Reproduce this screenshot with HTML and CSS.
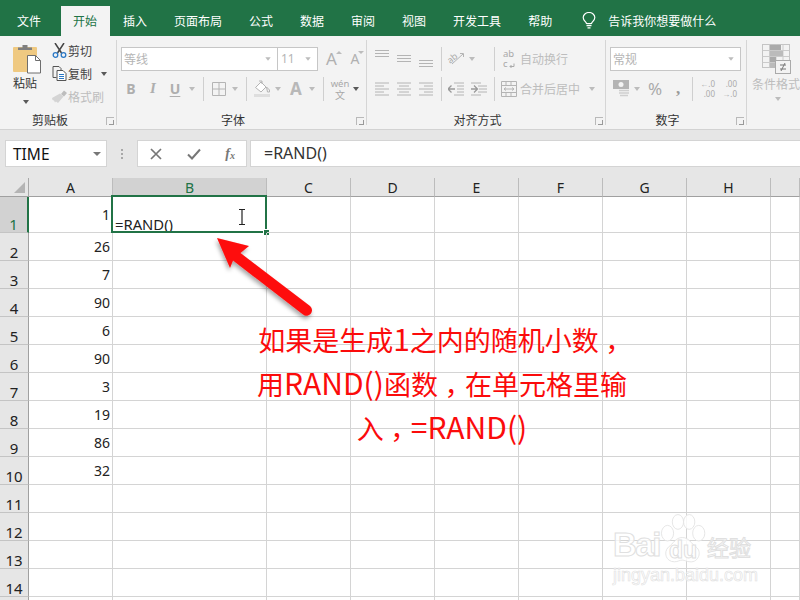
FILE: index.html
```html
<!DOCTYPE html>
<html lang="zh-CN">
<head>
<meta charset="utf-8">
<title>Excel RAND</title>
<link rel="stylesheet" href="styles.css">
</head>
<body>
<div class="app">
  <nav class="tabs">
    <span class="tab first">文件</span>
    <span class="tab active">开始</span>
    <span class="tab">插入</span>
    <span class="tab">页面布局</span>
    <span class="tab">公式</span>
    <span class="tab">数据</span>
    <span class="tab">审阅</span>
    <span class="tab">视图</span>
    <span class="tab">开发工具</span>
    <span class="tab">帮助</span>
    <svg class="bulb" width="14" height="17" viewBox="0 0 14 17"><path d="M4.5 11.5C4 9.5 1.2 8.5 1.2 5.5a5.8 5 0 0 1 11.6 0c0 3-2.800 4-3.300 6z" fill="none" stroke="#fff" stroke-width="1.200"/><path d="M4.500 13.500h5M5.500 15.800h3" stroke="#fff" stroke-width="1.300"/></svg>
    <span class="tell">告诉我你想要做什么</span>
  </nav>

  <section class="ribbon">
    <div class="group g-clip">
      <div class="clip-body">
        <div class="paste">
          <svg width="28" height="30" viewBox="0 0 28 30"><rect x="0" y="3" width="24" height="25" rx="1" fill="#efc981"/><path d="M5 6V3.500h4.500V1h5v2.500H19V6z" fill="#7f7f7f"/><path d="M14.500 11.500h8l5 5v12.500h-13z" fill="#fff" stroke="#6e6e6e"/><path d="M22.500 11.500v5h5" fill="none" stroke="#6e6e6e"/></svg>
          <span class="paste-label">粘贴</span>
          <i class="caret dark paste-caret"></i>
        </div>
        <div class="clip-tools">
          <div class="tool"><span class="tool-icon">
            <svg width="15" height="15" viewBox="0 0 15 15"><path d="M3 0l6.500 10M12 0L5.500 10" stroke="#444" stroke-width="1.500" fill="none"/><circle cx="3.500" cy="12" r="2.300" fill="none" stroke="#2b78c5" stroke-width="1.300"/><circle cx="11.500" cy="12" r="2.300" fill="none" stroke="#2b78c5" stroke-width="1.300"/></svg>
          </span><span class="tool-text">剪切</span></div>
          <div class="tool"><span class="tool-icon">
            <svg width="15" height="15" viewBox="0 0 15 15"><path d="M1 .5h6l2 2v2M4.500 11.500H1V.5" fill="none" stroke="#555"/><path d="M5 4.500h6l3 3v7H5z" fill="#fff" stroke="#555"/><path d="M7 8.500h5M7 10.500h5M7 12.500h5" stroke="#2b78c5"/></svg>
          </span><span class="tool-text">复制</span><i class="caret dark copy-caret"></i></div>
          <div class="tool"><span class="tool-icon">
            <svg width="17" height="14" viewBox="0 0 17 14"><path d="M10 4l3-3.500 3 2.500-3 3.500z" fill="#bdbdbd"/><path d="M1 8l8-4.500 3.500 3L7 13 5 11.500 4 12.500 3 10.500 1.500 10z" fill="#d4d4d4"/></svg>
          </span><span class="tool-text off">格式刷</span></div>
        </div>
      </div>
      <div class="g-label">剪贴板</div>
      <i class="launcher"></i>
    </div>

    <div class="group g-font">
      <div class="g-row font-r1">
        <div class="select sel-name"><span>等线</span><i class="caret"></i></div>
        <div class="select sel-size"><span>11</span><i class="caret"></i></div>
        <span class="cell glyph-a big">A<i class="up"></i></span>
        <span class="cell glyph-a small">A<i class="down"></i></span>
      </div>
      <div class="g-row font-r2">
        <b class="cell fmt">B</b>
        <i class="cell fmt ital">I</i>
        <u class="cell fmt">U</u>
        <span class="cell"><i class="caret"></i></span>
        <span class="cell"><i class="sep"></i></span>
        <span class="cell"><svg width="14" height="14" viewBox="0 0 14 14"><path d="M.5.500h13v13H.5zM7 .5v13M.5 7h13" fill="none" stroke="#b4b4b4"/></svg></span>
        <span class="cell"><i class="caret"></i></span>
        <span class="cell"><i class="sep"></i></span>
        <span class="cell"><svg width="17" height="17" viewBox="0 0 17 17"><path d="M1.500 7.500L7 2l5 5-5 5z" fill="#fff" stroke="#b4b4b4"/><path d="M5 1h3v3M12.500 7l3 3v2h-2z" fill="none" stroke="#b4b4b4"/><rect x="0" y="14" width="16" height="3" fill="#dedede"/></svg></span>
        <span class="cell"><i class="caret"></i></span>
        <span class="cell letter">A</span>
        <span class="cell"><i class="caret"></i></span>
        <span class="cell"><i class="sep"></i></span>
        <span class="cell wen"><span class="wen-top">wén</span><span class="wen-bot">文</span></span>
        <span class="cell"><i class="caret dark"></i></span>
      </div>
      <div class="g-label">字体</div>
      <i class="launcher"></i>
    </div>

    <div class="group g-align">
      <div class="g-row al-r1">
        <span class="cell"><svg width="16" height="20" viewBox="0 0 16 20"><path d="M1 1.500h14M1 4.500h14M1 7.500h14" stroke="#b4b4b4"/></svg></span>
        <span class="cell"><svg width="16" height="20" viewBox="0 0 16 20"><path d="M1 6.500h14M1 9.500h14M1 12.500h14" stroke="#b4b4b4"/></svg></span>
        <span class="cell"><svg width="16" height="20" viewBox="0 0 16 20"><path d="M1 11.500h14M1 14.500h14M1 17.500h14" stroke="#b4b4b4"/></svg></span>
        <span class="cell"><i class="sep"></i></span>
        <span class="cell"><svg class="rot" width="18" height="16" viewBox="0 0 18 16"><path d="M5 13L16 3M13 2.500h3.500V6" fill="none" stroke="#b4b4b4"/><text class="rot-ab" x="1" y="11" transform="rotate(-40 5 9)">ab</text></svg></span>
        <span class="cell"><i class="caret"></i></span>
        <span></span>
        <span class="cell"><i class="sep"></i></span>
        <span class="cell wrap-ab"><span>ab</span><span class="wrap-c">c<svg width="6" height="6" viewBox="0 0 6 6"><path d="M5 .5v3H1M2.500 2L1 3.500 2.500 5" fill="none" stroke="#aaa"/></svg></span></span>
        <span class="al-text">自动换行</span>
      </div>
      <div class="g-row al-r2">
        <span class="cell"><svg width="16" height="14" viewBox="0 0 16 14"><path d="M1 1.500h14M1 4.500h9M1 7.500h14M1 10.500h9M1 13.500h14" stroke="#b4b4b4" transform="translate(0 -.5)"/></svg></span>
        <span class="cell"><svg width="16" height="14" viewBox="0 0 16 14"><path d="M1 1h14M3 4h10M1 7h14M3 10h10M1 13h14" stroke="#b4b4b4"/></svg></span>
        <span class="cell"><svg width="16" height="14" viewBox="0 0 16 14"><path d="M1 1h14M6 4h9M1 7h14M6 10h9M1 13h14" stroke="#b4b4b4"/></svg></span>
        <span class="cell"><i class="sep"></i></span>
        <span class="cell"><svg width="16" height="14" viewBox="0 0 16 14"><path d="M6 1h10M9 4h7M9 7h7M9 10h7M6 13h10" stroke="#b4b4b4"/><path d="M0 7h7M3.500 3.500L0 7l3.500 3.500" fill="none" stroke="#9a9a9a" stroke-width="1.300"/></svg></span>
        <span class="cell"><svg width="16" height="14" viewBox="0 0 16 14"><path d="M0 1h10M7 4h9M8 7h8M7 10h9M0 13h10" stroke="#b4b4b4"/><path d="M0 7h6M3 3.500L6.500 7 3 10.500" fill="none" stroke="#9a9a9a" stroke-width="1.300"/></svg></span>
        <span class="cell"><i class="sep"></i></span>
        <span class="cell"><svg width="16" height="16" viewBox="0 0 16 16"><path d="M.5.500h15v15H.5zM.5 4.500h15M.5 11.500h15M5 .5v4M10 .5v4M5 11.500v4M10 11.500v4M3 8h10M3 8l2-1.500M3 8l2 1.500M13 8l-2-1.500M13 8l-2 1.500" fill="none" stroke="#b4b4b4"/></svg></span>
        <span class="al-text">合并后居中</span>
        <span class="cell"><i class="caret"></i></span>
      </div>
      <div class="g-label">对齐方式</div>
      <i class="launcher"></i>
    </div>

    <div class="group g-num">
      <div class="g-row num-r1">
        <div class="select sel-fmt"><span>常规</span><i class="caret"></i></div>
      </div>
      <div class="g-row num-r2">
        <span class="cell"><svg width="17" height="18" viewBox="0 0 17 18"><rect x="0" y="0" width="16" height="9" fill="#b4b4b4"/><circle cx="8" cy="4.500" r="2.500" fill="#f3f3f3"/><path d="M6 10.500h10M6 13h10M7 15.500h8" stroke="#cfcfcf" stroke-width="1.500"/></svg></span>
        <span class="cell"><i class="caret"></i></span>
        <span class="cell pct">%</span>
        <span class="cell comma">,</span>
        <span class="cell"><i class="sep"></i></span>
        <span class="cell dec"><span>←.0</span><span>.00</span></span>
        <span class="cell dec"><span>.00</span><span>→.0</span></span>
      </div>
      <div class="g-label">数字</div>
      <i class="launcher"></i>
    </div>

    <div class="group g-style">
      <svg class="cf-icon" width="29" height="30" viewBox="0 0 29 30">
        <rect x=".5" y=".5" width="27" height="23" fill="#f3f3f3" stroke="#c4c4c4"/>
        <path d="M7.500 .5v23M14 .5v23M21 .5v23M.5 6.500h27M.5 12.500h27M.5 18.500h27" stroke="#cbcbcb"/>
        <rect x="8" y="1" width="11" height="5" fill="#aaa"/><rect x="8" y="7" width="13" height="5" fill="#bbb"/><rect x="8" y="13" width="6" height="5" fill="#aaa"/><rect x="8" y="19" width="6" height="5" fill="#bbb"/>
        <rect x="13.500" y="16.500" width="15" height="13" fill="#f3f3f3" stroke="#aaa"/>
        <path d="M18 21h6M18 25h6M23 19l-4 8" stroke="#777" fill="none"/>
      </svg>
      <span class="cf-label">条件格式</span>
      <i class="caret cf-caret"></i>
    </div>
  </section>

  <section class="fbar">
    <div class="namebox"><span>TIME</span><i class="caret dark"></i></div>
    <div class="dots"><i></i><i></i><i></i></div>
    <div class="fbtns">
      <svg width="12" height="12" viewBox="0 0 12 12"><path d="M1 1l10 10M11 1L1 11" stroke="#777" stroke-width="1.700"/></svg>
      <svg width="14" height="12" viewBox="0 0 14 12"><path d="M1 6.500L5 10.500 13 1.500" fill="none" stroke="#777" stroke-width="2"/></svg>
      <span class="fx">f<sub>x</sub></span>
    </div>
    <div class="finput">=RAND()</div>
  </section>

  <section class="sheet">
    <div class="corner"><i></i></div>
    <div class="ch">A</div><div class="ch on">B</div><div class="ch">C</div><div class="ch">D</div><div class="ch">E</div><div class="ch">F</div><div class="ch">G</div><div class="ch">H</div><div class="ch"></div>

    <div class="rh on">1</div><div class="c v first">1</div>
    <div class="c b1">=RAND()<div class="selbox"><i class="handle"></i></div>
      <svg class="ibeam" width="8" height="16" viewBox="0 0 8 16"><path d="M1 .5h6M1 15.500h6M4 .5v15" stroke="#222" stroke-width="1.200" fill="none"/></svg>
    </div>
    <div class="c"></div><div class="c"></div><div class="c"></div><div class="c"></div><div class="c"></div><div class="c"></div><div class="c"></div>

    <div class="rh">2</div><div class="c v">26</div><div class="c"></div><div class="c"></div><div class="c"></div><div class="c"></div><div class="c"></div><div class="c"></div><div class="c"></div><div class="c"></div>
    <div class="rh">3</div><div class="c v">7</div><div class="c"></div><div class="c"></div><div class="c"></div><div class="c"></div><div class="c"></div><div class="c"></div><div class="c"></div><div class="c"></div>
    <div class="rh">4</div><div class="c v">90</div><div class="c"></div><div class="c"></div><div class="c"></div><div class="c"></div><div class="c"></div><div class="c"></div><div class="c"></div><div class="c"></div>
    <div class="rh">5</div><div class="c v">6</div><div class="c"></div><div class="c"></div><div class="c"></div><div class="c"></div><div class="c"></div><div class="c"></div><div class="c"></div><div class="c"></div>
    <div class="rh">6</div><div class="c v">90</div><div class="c"></div><div class="c"></div><div class="c"></div><div class="c"></div><div class="c"></div><div class="c"></div><div class="c"></div><div class="c"></div>
    <div class="rh">7</div><div class="c v">3</div><div class="c"></div><div class="c"></div><div class="c"></div><div class="c"></div><div class="c"></div><div class="c"></div><div class="c"></div><div class="c"></div>
    <div class="rh">8</div><div class="c v">19</div><div class="c"></div><div class="c"></div><div class="c"></div><div class="c"></div><div class="c"></div><div class="c"></div><div class="c"></div><div class="c"></div>
    <div class="rh">9</div><div class="c v">86</div><div class="c"></div><div class="c"></div><div class="c"></div><div class="c"></div><div class="c"></div><div class="c"></div><div class="c"></div><div class="c"></div>
    <div class="rh">10</div><div class="c v">32</div><div class="c"></div><div class="c"></div><div class="c"></div><div class="c"></div><div class="c"></div><div class="c"></div><div class="c"></div><div class="c"></div>
    <div class="rh">11</div><div class="c"></div><div class="c"></div><div class="c"></div><div class="c"></div><div class="c"></div><div class="c"></div><div class="c"></div><div class="c"></div><div class="c"></div>
    <div class="rh">12</div><div class="c"></div><div class="c"></div><div class="c"></div><div class="c"></div><div class="c"></div><div class="c"></div><div class="c"></div><div class="c"></div><div class="c"></div>
    <div class="rh">13</div><div class="c"></div><div class="c"></div><div class="c"></div><div class="c"></div><div class="c"></div><div class="c"></div><div class="c"></div><div class="c"></div><div class="c"></div>
    <div class="rh">14</div><div class="c"></div><div class="c"></div><div class="c"></div><div class="c"></div><div class="c"></div><div class="c"></div><div class="c"></div><div class="c"></div><div class="c"></div>
    <div class="rh"></div><div class="c"></div><div class="c"></div><div class="c"></div><div class="c"></div><div class="c"></div><div class="c"></div><div class="c"></div><div class="c"></div><div class="c"></div>
  </section>

  <svg class="arrow" width="110" height="95" viewBox="210 230 110 95">
    <defs><filter id="sh" x="-20%" y="-20%" width="140%" height="140%"><feDropShadow dx="-1" dy="3" stdDeviation="2" flood-color="#000" flood-opacity=".35"/></filter></defs>
    <g filter="url(#sh)"><path d="M217 238L249 246 240.500 253 310 306a5.500 5.500 0 0 1-7 8.500L233 260.500 230 268z" fill="#fe0b0b"/></g>
  </svg>

  <p class="note">如果是生成<span class="lat">1</span>之内的随机小数<span class="cm">，</span><br>用<span class="lat">RAND()</span>函数<span class="cm">，</span>在单元格里输<br>入<span class="cm">，</span><span class="lat">=RAND()</span></p>

  <div class="mark">
    <svg class="paw" width="52" height="54" viewBox="0 0 60 62"><g fill="rgba(255,255,255,.8)" stroke="#e2e2e2" stroke-width="1"><ellipse cx="11" cy="22" rx="7" ry="9"/><ellipse cx="23" cy="9" rx="6.500" ry="8.500"/><ellipse cx="36" cy="9" rx="6.500" ry="8.500"/><ellipse cx="47" cy="22" rx="7" ry="9"/><path d="M28 27c8 0 10 7 16 11 7 5 3 18-7 17-4 0-6-2-9-2s-5 2-9 2C9 55 6 44 12 38c6-4 8-11 16-11z"/></g></svg>
    <span class="mk-bai">Bai</span>
    <span class="mk-du">du</span>
    <span class="mk-jy">经验</span>
    <span class="mk-url">jingyan.baidu.com</span>
  </div>
</div>
</body>
</html>
```
FILE: styles.css
```css
* { box-sizing: border-box; }
html, body { margin: 0; padding: 0; }
body { width: 800px; height: 600px; overflow: hidden; background: #fff; font-family: "Noto Sans", "Noto Sans CJK SC", sans-serif; }
i { font-style: normal; }
.app { position: relative; width: 800px; height: 600px; overflow: hidden; display: flex; flex-direction: column; font-family: "Noto Sans", "Noto Sans CJK SC", sans-serif; }

/* tabs */
.tabs { height: 36px; flex: none; background: #217346; display: flex; align-items: flex-end; color: #fff; font: 12px/30px "Noto Sans CJK SC", sans-serif; }
.tab { height: 30px; padding: 0 13.5px; white-space: nowrap; }
.tab.first { margin-left: 3.500px; margin-right: 6px; }
.tab.active { background: #f3f3f3; color: #217346; width: 49px; padding: 0; text-align: center; margin-right: -0.5px; padding-left: 0; }
.tab.active + .tab { padding-left: 14px; }
.bulb { margin: 0 0 7px 16.500px; }
.tell { margin-left: 12px; height: 30px; }

/* ribbon */
.ribbon { height: 94px; flex: none; background: #f3f3f3; border-bottom: 1px solid #d2d2d2; display: flex; color: #444; font: 12px/16px "Noto Sans CJK SC", sans-serif; }
.group { position: relative; height: 93px; display: flex; flex-direction: column; padding-top: 11px; }
.group::after { content: ""; position: absolute; right: 0; top: 4px; height: 85px; width: 1px; background: #d5d5d5; }
.g-clip { width: 117px; padding-top: 3px; }
.g-font { width: 250px; padding-left: 4px; }
.g-align { width: 239px; padding-left: 4px; }
.g-num { width: 141px; padding-left: 4px; }
.g-style { flex: 1; padding: 8px 0 0 15px; }
.g-style::after { display: none; }
.g-label { margin-top: auto; height: 16px; margin-bottom: 1px; margin-right: 22px; text-align: center; color: #333; white-space: nowrap; }
.launcher { position: absolute; right: 3px; bottom: 4px; width: 8px; height: 8px; border: 1px solid #b9b9b9; border-width: 1px 0 0 1px; }
.launcher::after { content: ""; position: absolute; right: 0; bottom: 0; width: 4px; height: 4px; border-right: 1px solid #999; border-bottom: 1px solid #999; }
.g-row { display: grid; height: 23px; align-items: center; }
.g-row + .g-row { margin-top: 7px; }
.cell { display: flex; align-items: center; justify-content: center; height: 23px; min-width: 0; }
.caret { display: block; width: 0; height: 0; border: 3.500px solid transparent; border-top: 4px solid #bcbcbc; border-bottom: 0; }
.caret.dark { border-top-color: #595959; }
.sep { display: block; width: 1px; height: 24px; background: #cfcfcf; }

/* clipboard */
.clip-body { display: flex; height: 85px; }
.paste { width: 50px; padding: 5px 0 0 13px; display: flex; flex-direction: column; align-items: flex-start; }
.paste-label { color: #333; margin-top: 0; line-height: 18px; }
.paste-caret { margin: 8px 0 0 10px; }
.clip-tools { display: flex; flex-direction: column; }
.tool { display: flex; align-items: center; height: 23px; }
.tool-icon { width: 18px; display: flex; justify-content: center; }
.tool-text { color: #444; }
.tool-text.off { color: #bdbdbd; }
.copy-caret { margin-left: 9px; }
.g-clip .g-label { margin-top: -10px; margin-right: 17px; }

/* selects */
.select { height: 24px; background: #fff; border: 1px solid #c6c6c6; display: flex; align-items: center; justify-content: space-between; padding: 0 6px 0 2px; color: #b5b5b5; }
.sel-fmt { width: 131px; }
.select .caret { transform: scale(.9); }
.font-r1 { grid-template-columns: 157px 41px 25px 22px; }
.font-r2 { grid-template-columns: 20px 24px 20px 14px 8px 24px 8px 14px 18px 14px 22px 10px 12px 22px 10px; }
.sel-size { margin-left: -1px; width: 41px; padding-left: 3px; font-family: "Noto Sans", sans-serif; }
.glyph-a { position: relative; color: #b0b0b0; font-family: "Noto Sans", sans-serif; }
.glyph-a.big { font-size: 17px; }
.glyph-a.small { font-size: 14px; }
.up, .down { position: absolute; top: 3px; right: 2px; width: 0; height: 0; border: 3px solid transparent; }
.up { border-bottom: 3px solid #bcbcbc; border-top: 0; }
.down { border-top: 3px solid #bcbcbc; border-bottom: 0; }
.fmt { font: bold 14px "Noto Sans", sans-serif; color: #aeaeae; }
.fmt.ital { font-style: italic; font-family: "Liberation Serif", serif; font-size: 15px; }
u.fmt { text-underline-offset: 2px; }
.letter { font: bold 17px "Noto Sans", sans-serif; color: #b8b8b8; }
.wen { flex-direction: column; color: #a8a8a8; }
.wen-top { font: 9.500px/11px "Noto Sans", sans-serif; }
.wen-bot { font: 10px/11px "Noto Sans CJK SC", sans-serif; }

/* align */
.al-r1 { grid-template-columns: 22px 22px 22px 8px 22px 10px 13px 8px 22px auto; }
.al-r2 { grid-template-columns: 22px 22px 22px 8px 22px 23px 8px 22px 61px 22px; }
.rot { overflow: visible; }
.rot-ab { font: 9px "Noto Sans", sans-serif; fill: #aaa; }
.wrap-ab { flex-direction: column; align-items: flex-start; padding-left: 5px; font: 9.500px/10px "Noto Sans", sans-serif; color: #a8a8a8; white-space: nowrap; }
.wrap-c { display: flex; align-items: flex-end; gap: 1px; }
.al-text { color: #bdbdbd; white-space: nowrap; }

/* number */
.num-r1 { grid-template-columns: 131px; }
.num-r2 { grid-template-columns: 22px 10px 26px 20px 8px 22px 22px; }
.pct { font: 17px "Noto Sans", sans-serif; color: #aaa; }
.comma { font: bold 17px/14px "Liberation Serif", serif; color: #9a9a9a; }
.dec { flex-direction: column; align-items: flex-end; padding-right: 3px; font: 8px/10px "Noto Sans", sans-serif; color: #aaa; white-space: nowrap; }

/* styles */
.g-style { align-items: flex-start; }
.cf-label { margin-left: -10px; margin-top: 2px; color: #bdbdbd; white-space: nowrap; line-height: 16px; }
.cf-caret { margin: 5px 0 0 13px; }

/* formula bar */
.fbar { height: 48px; flex: none; background: #e6e6e6; padding: 10px 0 11px 5px; display: flex; align-items: stretch; }
.namebox { width: 102px; background: #fff; border: 1px solid #d4d4d4; display: flex; align-items: center; justify-content: space-between; padding: 0 0 0 7px; color: #111; font-size: 15.500px; }
.namebox .caret { margin-right: 5px; border-width: 4px 4px 0; border-top-color: #777; }
.dots { width: 30px; display: flex; flex-direction: column; align-items: center; justify-content: center; gap: 2px; }
.dots i { width: 2px; height: 2px; background: #a8a8a8; }
.fbtns { width: 110px; background: #fff; border: 1px solid #d4d4d4; display: flex; align-items: center; justify-content: space-between; padding: 0 11px 0 12px; }
.fx { font: italic bold 14px "Liberation Serif", serif; color: #777; }
.fx sub { font-size: 10px; vertical-align: -1px; }
.finput { flex: 1; margin-left: 3px; background: #fff; border: 1px solid #d4d4d4; border-right: 0; padding-left: 13px; font-size: 16px; line-height: 24px; color: #333; }

/* sheet */
.sheet { flex: 1; min-height: 0; display: grid; grid-template-columns: 29px 84px 154px 84px 84px 84px 84px 84px 84px 29px; grid-template-rows: 19px 36px repeat(14, 28px); overflow: hidden; color: #222; background: #fff; }
.corner { background: #e6e6e6; border-right: 1px solid #a8a8a8; border-bottom: 1px solid #a0a0a0; display: flex; justify-content: flex-end; align-items: flex-end; padding: 0 3px 3px 0; }
.corner i { width: 0; height: 0; border-left: 11px solid transparent; border-bottom: 11px solid #b4b4b4; }
.ch { background: #e6e6e6; border-right: 1px solid #bcbcbc; border-bottom: 1px solid #a0a0a0; text-align: center; font-size: 14px; line-height: 20px; color: #222; }
.ch.on { background: #d2d2d2; color: #217346; border-bottom-color: #217346; }
.rh { background: #e6e6e6; border-right: 1px solid #a0a0a0; border-bottom: 1px solid #c4c4c4; font-size: 15px; line-height: 16px; color: #222; display: flex; align-items: flex-end; justify-content: center; padding-bottom: 0; }
.rh.on { background: #d2d2d2; color: #217346; border-right: 2px solid #217346; }
.c { position: relative; border-right: 1px solid #d4d4d4; border-bottom: 1px solid #d4d4d4; font-size: 14px; line-height: 18px; color: #222; }
.v { display: flex; justify-content: flex-end; align-items: flex-end; padding: 0 2px 4px 0; }
.v.first { padding-bottom: 8px; }
.b1 { display: flex; align-items: flex-end; padding: 0 0 0 2px; font-size: 14.800px; line-height: 16px; }
.selbox { position: absolute; left: -2px; top: -2px; right: -1px; bottom: -1px; border: 2px solid #217346; }
.handle { position: absolute; right: -4px; bottom: -4px; width: 6px; height: 6px; background: #217346; border: 1px solid #fff; border-width: 1px 0 0 1px; }
.ibeam { position: absolute; left: 125px; top: 12px; }

/* overlays */
.arrow { position: absolute; left: 210px; top: 230px; }
.note { position: absolute; left: 252px; top: 318px; width: 380px; margin: 0; text-align: center; font: 27px/44.200px "Noto Sans CJK SC", sans-serif; color: #fb0b0b; white-space: nowrap; }
.lat { font-size: 30px; line-height: 1; }
.cm { font-feature-settings: "halt"; margin: 0 7px 0 6.500px; }
.mark { position: absolute; left: 610px; top: 510px; width: 150px; height: 80px; }
.paw { position: absolute; left: 47.500px; top: 4px; }
.mk-bai, .mk-du, .mk-jy, .mk-url { position: absolute; color: rgba(255,255,255,.75); -webkit-text-stroke: 1px #e0e0e0; white-space: nowrap; }
.mk-bai { left: 3px; top: 16px; font: bold 33px/38px "Liberation Sans", sans-serif; letter-spacing: -1.500px; }
.mk-du { left: 59px; top: 27px; font: bold 23px/26px "Liberation Sans", sans-serif; }
.mk-jy { left: 97px; top: 22px; font: 22px/28px "Noto Sans CJK SC", sans-serif; }
.mk-url { left: 3px; top: 54px; font: 18px/22px "Liberation Sans", sans-serif; -webkit-text-stroke: .6px #e0e0e0; }
```
